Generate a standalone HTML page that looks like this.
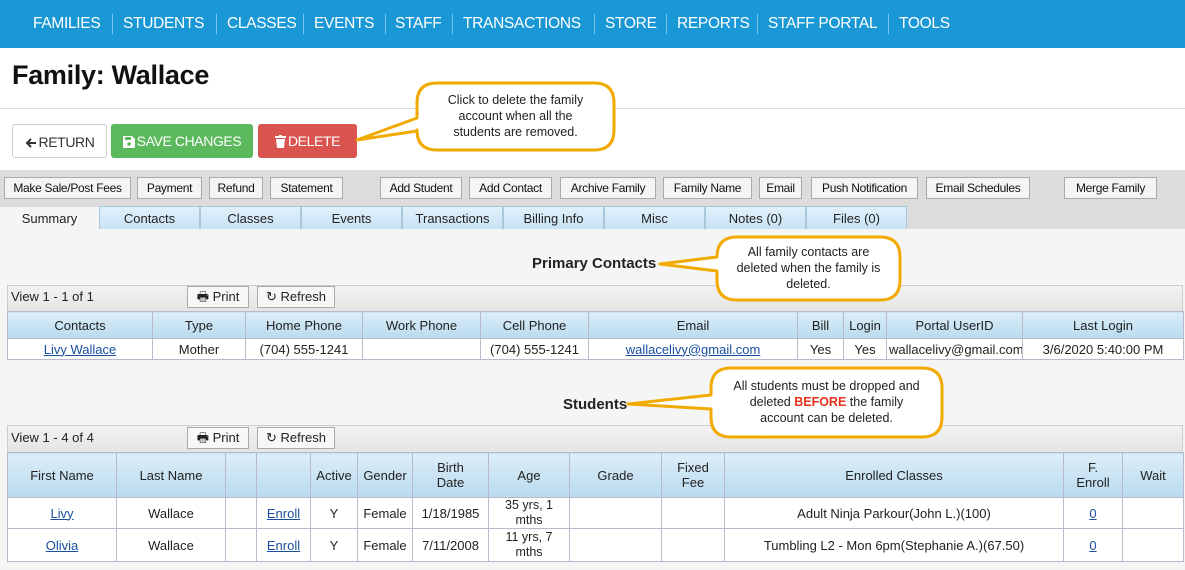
<!DOCTYPE html>
<html><head><meta charset="utf-8"><style>
*{box-sizing:border-box;margin:0;padding:0}
body{width:1185px;height:570px;overflow:hidden;background:#f5f5f5;font-family:"Liberation Sans",sans-serif;font-size:13px;color:#222;position:relative}
.a{position:absolute}
.nav{left:0;top:0;width:1185px;height:48px;background:#1a98d5}
.nav span{position:absolute;top:15px;color:#fff;font-size:15.5px;letter-spacing:-.3px}
.nav i{position:absolute;top:14px;width:1px;height:20px;background:#7cc3e8}
.white{left:0;top:48px;width:1185px;height:122px;background:#fff}
.btn{position:absolute;top:124px;height:34px;border-radius:3px;font-size:14px;line-height:34px;text-align:center;letter-spacing:-.4px}
.btn svg{vertical-align:-2px;margin-right:2px}
.gray{left:0;top:170px;width:1185px;height:59px;background:#dcdcdc}
.tb{position:absolute;top:177px;height:22px;border:1px solid #aaa;background:#f4f4f4;font-size:12px;line-height:20px;text-align:center;letter-spacing:-.3px;color:#111}
.tab{position:absolute;top:206px;height:23px;border:1px solid #a9c8dc;border-bottom:none;background:linear-gradient(#e2f1fb,#c7e3f5);font-size:13px;line-height:23px;text-align:center;color:#222}
table{position:absolute;border-collapse:collapse;background:#fff;table-layout:fixed}
td,th{border:1px solid #b9b9cc;text-align:center;font-size:13px;padding:0 2px;overflow:hidden;white-space:nowrap}
th{background:linear-gradient(#dcedf8,#b9dbef);font-weight:normal;color:#222;line-height:15px}
a{color:#1a4fa0;text-decoration:underline}
.bar{position:absolute;left:7px;width:1176px;background:linear-gradient(#f2f2f2,#e4e4e4);border:1px solid #ccc}
.sb{position:absolute;height:22px;border:1px solid #aaa;background:#f7f7f7;font-size:13px;line-height:20px;text-align:center}
.ct{position:absolute;text-align:center;font-size:12.5px;line-height:16px;color:#222}
</style></head><body>
<div class="a nav">
<span style="left:33px">FAMILIES</span><i style="left:112px"></i>
<span style="left:123px">STUDENTS</span><i style="left:216px"></i>
<span style="left:227px">CLASSES</span><i style="left:303px"></i>
<span style="left:314px">EVENTS</span><i style="left:385px"></i>
<span style="left:395px">STAFF</span><i style="left:452px"></i>
<span style="left:463px">TRANSACTIONS</span><i style="left:594px"></i>
<span style="left:605px">STORE</span><i style="left:666px"></i>
<span style="left:677px">REPORTS</span><i style="left:757px"></i>
<span style="left:768px">STAFF PORTAL</span><i style="left:888px"></i>
<span style="left:899px">TOOLS</span>
</div>
<div class="a white"></div>
<div class="a" style="left:12px;top:60px;font-size:27px;font-weight:bold;color:#111;letter-spacing:-.3px">Family: Wallace</div>
<div class="a" style="left:0;top:108px;width:1185px;height:1px;background:#ddd"></div>
<div class="btn" style="left:12px;width:95px;border:1px solid #ccc;background:#fff;color:#333"><svg width="12" height="12" viewBox="0 0 12 12"><path d="M11 6H2M6 2L2 6l4 4" stroke="#333" stroke-width="2" fill="none"/></svg>RETURN</div>
<div class="btn" style="left:111px;width:142px;background:#5cb85c;color:#fff"><svg width="12" height="12" viewBox="0 0 12 12"><path d="M0 1Q0 0 1 0H9L12 3V11Q12 12 11 12H1Q0 12 0 11Z" fill="#fff"/><rect x="2" y="1" width="6" height="3" fill="#5cb85c"/><circle cx="6" cy="8" r="1.8" fill="#5cb85c"/></svg>SAVE CHANGES</div>
<div class="btn" style="left:258px;width:99px;background:#d9534f;color:#fff"><svg width="11" height="13" viewBox="0 0 11 13"><rect x="0" y="1" width="11" height="2" fill="#fff"/><rect x="4" y="0" width="3" height="2" fill="#fff"/><path d="M1 4H10L9 13H2Z" fill="#fff"/></svg>DELETE</div>
<div class="a gray"></div>
<div class="tb" style="left:4px;width:127px">Make Sale/Post Fees</div>
<div class="tb" style="left:137px;width:65px">Payment</div>
<div class="tb" style="left:209px;width:54px">Refund</div>
<div class="tb" style="left:270px;width:73px">Statement</div>
<div class="tb" style="left:380px;width:82px">Add Student</div>
<div class="tb" style="left:469px;width:83px">Add Contact</div>
<div class="tb" style="left:560px;width:96px">Archive Family</div>
<div class="tb" style="left:663px;width:89px">Family Name</div>
<div class="tb" style="left:759px;width:43px">Email</div>
<div class="tb" style="left:811px;width:107px">Push Notification</div>
<div class="tb" style="left:926px;width:104px">Email Schedules</div>
<div class="tb" style="left:1064px;width:93px">Merge Family</div>
<div class="tab" style="left:0;width:99px;background:#f5f5f5;border:none;top:207px">Summary</div>
<div class="tab" style="left:99px;width:101px">Contacts</div>
<div class="tab" style="left:200px;width:101px">Classes</div>
<div class="tab" style="left:301px;width:101px">Events</div>
<div class="tab" style="left:402px;width:101px">Transactions</div>
<div class="tab" style="left:503px;width:101px">Billing Info</div>
<div class="tab" style="left:604px;width:101px">Misc</div>
<div class="tab" style="left:705px;width:101px">Notes (0)</div>
<div class="tab" style="left:806px;width:101px">Files (0)</div>

<div class="a" style="left:532px;top:255px;font-size:15px;font-weight:bold">Primary Contacts</div>
<div class="bar" style="top:285px;height:27px"></div>
<div class="a" style="left:11px;top:289px;font-size:13px">View 1 - 1 of 1</div>
<div class="sb" style="left:187px;top:286px;width:62px">&#128438; Print</div>
<div class="sb" style="left:257px;top:286px;width:78px">&#8635; Refresh</div>
<table style="left:7px;top:311px;width:1176px">
<colgroup><col style="width:145px"><col style="width:93px"><col style="width:117px"><col style="width:118px"><col style="width:108px"><col style="width:209px"><col style="width:46px"><col style="width:43px"><col style="width:136px"><col style="width:161px"></colgroup>
<tr style="height:27px"><th>Contacts</th><th>Type</th><th>Home Phone</th><th>Work Phone</th><th>Cell Phone</th><th>Email</th><th>Bill</th><th>Login</th><th>Portal UserID</th><th>Last Login</th></tr>
<tr style="height:21px"><td><a>Livy Wallace</a></td><td>Mother</td><td>(704) 555-1241</td><td></td><td>(704) 555-1241</td><td><a>wallacelivy@gmail.com</a></td><td>Yes</td><td>Yes</td><td style="text-align:left">wallacelivy@gmail.com</td><td>3/6/2020 5:40:00 PM</td></tr>
</table>

<div class="a" style="left:563px;top:396px;font-size:15px;font-weight:bold">Students</div>
<div class="bar" style="top:425px;height:28px"></div>
<div class="a" style="left:11px;top:430px;font-size:13px">View 1 - 4 of 4</div>
<div class="sb" style="left:187px;top:427px;width:62px">&#128438; Print</div>
<div class="sb" style="left:257px;top:427px;width:78px">&#8635; Refresh</div>
<table style="left:7px;top:452px;width:1176px">
<colgroup><col style="width:109px"><col style="width:109px"><col style="width:31px"><col style="width:54px"><col style="width:47px"><col style="width:55px"><col style="width:76px"><col style="width:81px"><col style="width:92px"><col style="width:63px"><col style="width:339px"><col style="width:59px"><col style="width:61px"></colgroup>
<tr style="height:45px"><th>First Name</th><th>Last Name</th><th></th><th></th><th>Active</th><th>Gender</th><th style="white-space:normal">Birth<br>Date</th><th>Age</th><th>Grade</th><th>Fixed<br>Fee</th><th>Enrolled Classes</th><th>F.<br>Enroll</th><th>Wait</th></tr>
<tr style="height:31px"><td><a>Livy</a></td><td>Wallace</td><td></td><td><a>Enroll</a></td><td>Y</td><td>Female</td><td>1/18/1985</td><td style="line-height:15px;font-size:12.5px">35 yrs, 1<br>mths</td><td></td><td></td><td>Adult Ninja Parkour(John L.)(100)</td><td><a>0</a></td><td></td></tr>
<tr style="height:33px"><td><a>Olivia</a></td><td>Wallace</td><td></td><td><a>Enroll</a></td><td>Y</td><td>Female</td><td>7/11/2008</td><td style="line-height:15px;font-size:12.5px">11 yrs, 7<br>mths</td><td></td><td></td><td>Tumbling L2 - Mon 6pm(Stephanie A.)(67.50)</td><td><a>0</a></td><td></td></tr>
</table>

<svg class="a" style="left:0;top:0" width="1185" height="570">
<g fill="#fff" stroke="#f0aa00" stroke-width="3" stroke-linejoin="round">
<path d="M437,83 H594 Q614,83 614,103 V130 Q614,150 594,150 H437 Q417,150 417,130 V131 L357,140 L417,118 V103 Q417,83 437,83 Z"/>
<path d="M737,237 H880 Q900,237 900,257 V280 Q900,300 880,300 H737 Q717,300 717,280 V271 L660,264 L717,257 Q717,237 737,237 Z"/>
<path d="M731,368 H922 Q942,368 942,388 V417 Q942,437 922,437 H731 Q711,437 711,417 V409 L628,404 L711,395 V388 Q711,368 731,368 Z"/>
</g></svg>
<div class="ct" style="left:420px;top:92px;width:191px">Click to delete the family<br>account when all the<br>students are removed.</div>
<div class="ct" style="left:720px;top:244px;width:177px">All family contacts are<br>deleted when the family is<br>deleted.</div>
<div class="ct" style="left:714px;top:378px;width:225px">All students must be dropped and<br>deleted <b style="color:#e8321b">BEFORE</b> the family<br>account can be deleted.</div>
</body></html>
